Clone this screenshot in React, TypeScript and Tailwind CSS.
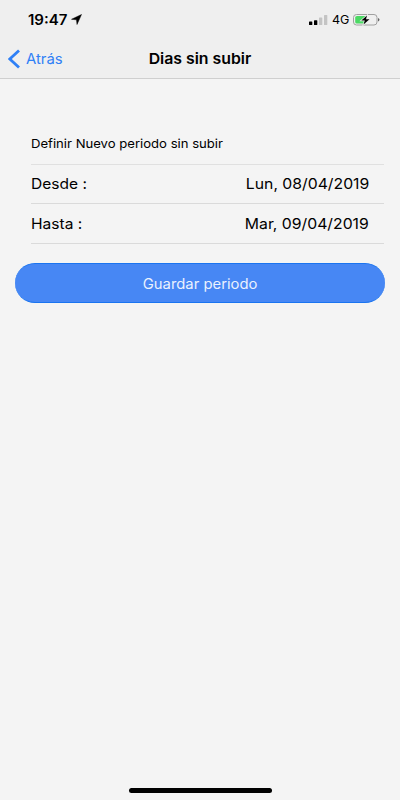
import React from "react";

type PeriodRowProps = {
  label: string;
  value: string;
};

const PeriodRow: React.FC<PeriodRowProps> = ({ label, value }) => (
  <div className="flex h-10 items-center justify-between border-b border-[#dadada] pr-[15px] pt-[2px] text-[14.6px] text-black first-of-type:h-[39px]">
    <span className="origin-left scale-x-[1.065]">{label}</span>
    <span className="origin-right scale-x-[1.080]">{value}</span>
  </div>
);

const StatusBar: React.FC = () => (
  <div className="flex h-10 items-center justify-between pl-7 pr-5">
    <div className="flex items-center gap-[6px]">
      <span className="origin-left scale-x-[1.060] text-[14.2px] font-semibold">19:47</span>
      <svg width="11" height="11" viewBox="0 0 11 11">
        <path d="M10.500 .5 6 10.500 5.500 5.800.5 5.300Z" fill="#000" stroke="#000" strokeWidth=".5" />
      </svg>
    </div>
    <div className="flex items-center">
      <svg width="19" height="10" viewBox="0 0 19 10">
        <rect x="0" y="6.500" width="3.300" height="3.500" rx=".6" fill="#000" />
        <rect x="5" y="5.200" width="3.300" height="4.800" rx=".6" fill="#000" />
        <rect x="10" y="2.500" width="3.300" height="7.500" rx=".6" fill="#c4c4c4" />
        <rect x="15" y="0" width="3.300" height="10" rx=".6" fill="#c4c4c4" />
      </svg>
      <span className="ml-1 w-[21px] origin-left scale-x-[1.060] pt-[2px] text-[11.8px]">4G</span>
      <svg width="27" height="12" viewBox="0 0 27 12">
        <rect x=".5" y=".5" width="23.500" height="10.500" rx="3" fill="none" stroke="#a0a0a0" />
        <path d="M4 2h9v7.500H4Q2.200 9.500 2.200 8V3.500Q2.200 2 4 2Z" fill="#4cd964" />
        <path
          d="M14 1.500 8.300 6.500h3.500L10.500 10.500l6-5.300H13z"
          fill="#000"
          stroke="#efefef"
          strokeWidth="1.400"
          paintOrder="stroke"
        />
        <path d="M25.200 4v3.500q1.200-.5 1.200-1.750T25.200 4" fill="#444" />
      </svg>
    </div>
  </div>
);

export default function App() {
  return (
    <div className="flex h-[800px] w-[400px] flex-col bg-[#f4f4f4] font-['Inter',sans-serif] text-black">
      <header className="h-[79px] border-b border-[#cfcfcf] bg-[#efefef]">
        <StatusBar />
        <div className="grid h-[38px] grid-cols-[1fr_auto_1fr] items-center">
          <button className="flex items-center gap-[6px] pl-2 text-[14.6px] text-[#2f80f6]">
            <svg width="12" height="20" viewBox="0 0 12 20">
              <path d="M11 1.500 1.800 10l9.200 8.500" fill="none" stroke="#2f80f6" strokeWidth="2.800" />
            </svg>
            <span className="origin-left scale-x-[1.020] pt-px">Atrás</span>
          </button>
          <h1 className="scale-x-[1.070] pt-px text-[14.8px] font-semibold">Dias sin subir</h1>
        </div>
      </header>
      <main className="flex-1">
        <section className="ml-[31px] mr-4 pt-[56px]">
          <h2 className="h-[30px] border-b border-[#e0e0e0] text-[12.3px] leading-[17px]">
            <span className="inline-block origin-left scale-x-[1.065]">
              Definir Nuevo periodo sin subir
            </span>
          </h2>
          <PeriodRow label="Desde :" value="Lun, 08/04/2019" />
          <PeriodRow label="Hasta :" value="Mar, 09/04/2019" />
        </section>
        <button className="ml-[15px] mt-[19px] h-10 w-[370px] rounded-full border-y border-[#1a74f0] bg-[#4787f4] pt-px text-[14px] text-[#eaf1fe]">
          <span className="inline-block scale-x-[1.060]">Guardar periodo</span>
        </button>
      </main>
      <footer className="flex h-3 justify-center">
        <div className="mt-[0.4px] h-[4.400px] w-[143px] rounded-full bg-black" />
      </footer>
    </div>
  );
}
